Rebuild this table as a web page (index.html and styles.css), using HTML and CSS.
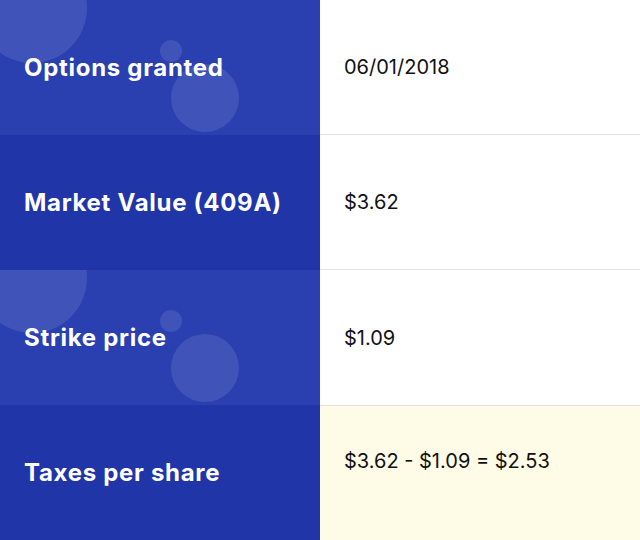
FILE: index.html
```html
<!DOCTYPE html>
<html>
<head>
<meta charset="utf-8">
<link rel="stylesheet" href="styles.css">
</head>
<body>
<div class="table">
  <div class="row">
    <div class="label light">
      <span class="bubble big"></span>
      <span class="bubble small"></span>
      <span class="bubble mid"></span>
      <span class="text">Options granted</span>
    </div>
    <div class="value">06/01/2018</div>
  </div>
  <div class="row">
    <div class="label dark"><span class="text">Market Value (409A)</span></div>
    <div class="value">$3.62</div>
  </div>
  <div class="row">
    <div class="label light">
      <span class="bubble big"></span>
      <span class="bubble small"></span>
      <span class="bubble mid"></span>
      <span class="text">Strike price</span>
    </div>
    <div class="value">$1.09</div>
  </div>
  <div class="row">
    <div class="label dark"><span class="text">Taxes per share</span></div>
    <div class="value result">$3.62 - $1.09 = $2.53</div>
  </div>
</div>
</body>
</html>
```
FILE: styles.css
```css
html, body {
  margin: 0;
  padding: 0;
  background: #ffffff;
}
.table {
  width: 640px;
  height: 540px;
  display: flex;
  flex-direction: column;
  font-family: Inter, "Noto Sans", sans-serif;
}
.row {
  display: grid;
  grid-template-columns: 320px 320px;
  height: 135px;
}
.label {
  position: relative;
  overflow: hidden;
  display: flex;
  align-items: center;
  padding-left: 24px;
  color: #ffffff;
  font-weight: 700;
  font-size: 24px;
  letter-spacing: 0.7px;
}
.label .text {
  position: relative;
}
.light {
  background: #2a40b0;
}
.dark {
  background: #1f35a8;
}
.bubble {
  position: absolute;
  border-radius: 50%;
  background: rgba(255, 255, 255, 0.1);
}
.big {
  left: -23px;
  top: -47px;
  width: 110px;
  height: 110px;
}
.small {
  left: 160px;
  top: 40px;
  width: 22px;
  height: 22px;
}
.mid {
  left: 171px;
  top: 64px;
  width: 68px;
  height: 68px;
}
.value {
  display: flex;
  align-items: center;
  padding-left: 24px;
  border-bottom: 1px solid #e4e4e4;
  color: #111111;
  font-size: 20px;
  font-weight: 400;
  background: #ffffff;
}
.result {
  background: #fefbe7;
  border-bottom: none;
  border-top: 1px solid #e8e2e0;
  padding-bottom: 24px;
}
.row:nth-child(3) .value {
  border-bottom: none;
}
```
